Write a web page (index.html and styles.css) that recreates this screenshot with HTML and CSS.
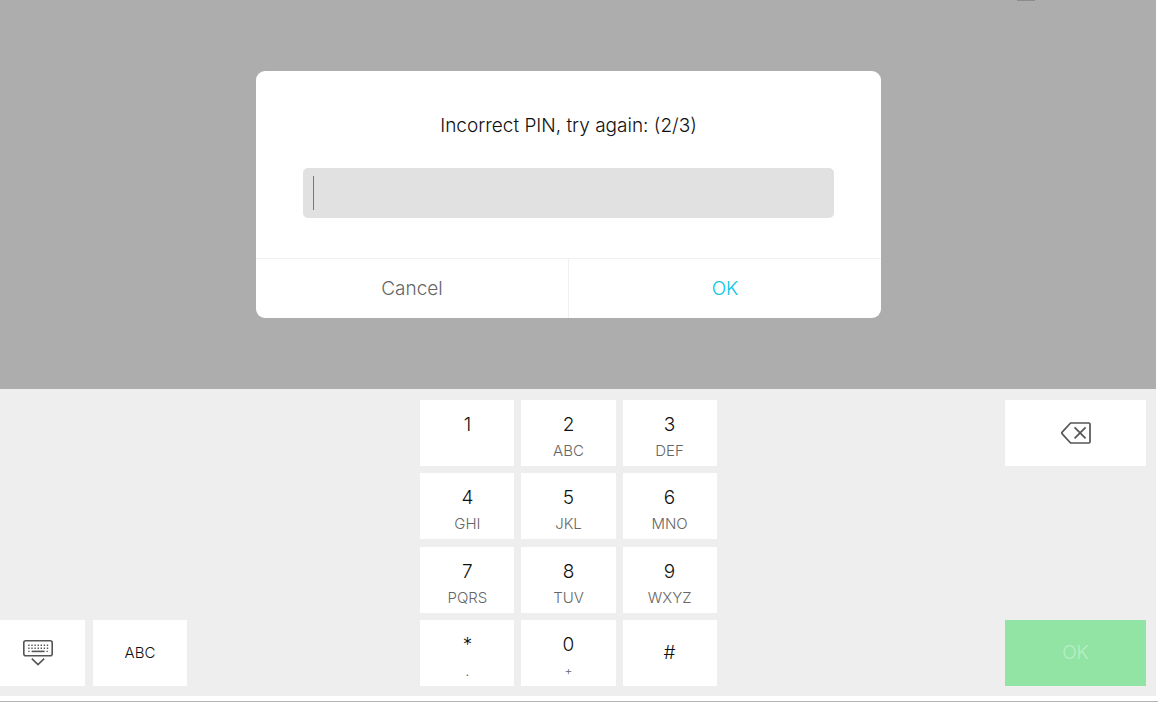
FILE: index.html
```html
<!DOCTYPE html>
<html lang="en">
<head>
<meta charset="utf-8">
<title>Enter PIN</title>
<link rel="stylesheet" href="styles.css">
</head>
<body>
<main class="screen">
  <section class="stage">
    <span class="handle"></span>
    <form class="dialog" role="dialog" aria-labelledby="pin-label">
      <div class="dialog-body">
        <label class="dialog-title" id="pin-label" for="pin">Incorrect PIN, try again: (2/3)</label>
        <div class="pin-field">
          <span class="caret"></span>
          <input class="pin-input" id="pin" type="password" inputmode="numeric">
        </div>
      </div>
      <div class="dialog-actions">
        <button class="action" type="button">Cancel</button>
        <button class="action action-primary" type="button">OK</button>
      </div>
    </form>
  </section>
  <section class="keyboard" aria-label="Keyboard">
    <div class="side side-left">
      <button class="key" type="button" aria-label="Hide keyboard">
        <svg class="icon" width="30" height="26" viewBox="0 0 30 26" fill="none" stroke="#555" stroke-width="1.6">
          <rect x="0.8" y="0.8" width="28.4" height="15" rx="2"/>
          <path d="M5.2 5.2h20M5.2 8.2h20" stroke-dasharray="1.4 1.7" stroke-width="1.4"/>
          <path d="M5.2 11.4h1.4M23.4 11.4h1.4" stroke-width="1.4"/>
          <path d="M8.6 11.4h13" stroke-width="1.6"/>
          <path d="M8.8 18.6l6.2 6 6.2-6"/>
        </svg>
      </button>
      <button class="key key-mode" type="button">ABC</button>
    </div>
    <div class="keypad">
      <button class="key key-double" type="button"><span class="digit">1</span><span class="letters"></span></button>
      <button class="key key-double" type="button"><span class="digit">2</span><span class="letters">ABC</span></button>
      <button class="key key-double" type="button"><span class="digit">3</span><span class="letters">DEF</span></button>
      <button class="key key-double" type="button"><span class="digit">4</span><span class="letters">GHI</span></button>
      <button class="key key-double" type="button"><span class="digit">5</span><span class="letters">JKL</span></button>
      <button class="key key-double" type="button"><span class="digit">6</span><span class="letters">MNO</span></button>
      <button class="key key-double" type="button"><span class="digit">7</span><span class="letters">PQRS</span></button>
      <button class="key key-double" type="button"><span class="digit">8</span><span class="letters">TUV</span></button>
      <button class="key key-double" type="button"><span class="digit">9</span><span class="letters">WXYZ</span></button>
      <button class="key key-double" type="button"><span class="digit">*</span><span class="letters">.</span></button>
      <button class="key key-double" type="button"><span class="digit">0</span><span class="letters letters-small">+</span></button>
      <button class="key" type="button"><span class="digit">#</span></button>
    </div>
    <div class="side side-right">
      <button class="key" type="button" aria-label="Delete">
        <svg class="icon" width="30" height="22" viewBox="0 0 30 22" fill="none" stroke="#555" stroke-width="1.7">
          <path d="M9.6 1h18.2a1.2 1.2 0 0 1 1.2 1.2v17.6a1.2 1.2 0 0 1-1.2 1.2H9.6L1.4 12.2a1.7 1.7 0 0 1 0-2.4z"/>
          <path d="M13.6 5.4l11 11M24.6 5.4l-11 11"/>
        </svg>
      </button>
      <button class="key key-ok" type="button">OK</button>
    </div>
  </section>
</main>
</body>
</html>
```
FILE: styles.css
```css
* {
  box-sizing: border-box;
}

body {
  margin: 0;
  height: 100vh;
  padding: 0 2px 5px 0;
  border-bottom: 1px solid #b5b5b5;
  overflow: hidden;
  background: #fff;
  color: #111;
  font-family: Inter, "Liberation Sans", sans-serif;
  font-weight: 300;
}

button,
input {
  border: 0;
  padding: 0;
  background: none;
  color: inherit;
  font: inherit;
  outline: none;
}

/* The left edge of the device screen runs past the window. */
.screen {
  display: flex;
  flex-direction: column;
  height: 100%;
  margin-left: -19px;
}

.stage {
  position: relative;
  flex: 1;
  display: flex;
  align-items: center;
  justify-content: center;
  background: #adadad;
}

.handle {
  position: absolute;
  top: 0;
  right: 121px;
  width: 18px;
  height: 1px;
  background: #8c8c8c;
}

.dialog {
  width: 53.2%;
  border-radius: 9px;
  overflow: hidden;
  background: #fff;
  font-size: 19px;
  line-height: 24px;
}

.dialog-body {
  display: flex;
  flex-direction: column;
  gap: 30px;
  padding: 43px 47px 40px;
}

.dialog-title {
  text-align: center;
}

.pin-field {
  display: flex;
  align-items: center;
  height: 50px;
  padding: 0 10px;
  border-radius: 5px;
  background: #e1e1e1;
}

.caret {
  width: 1px;
  height: 34px;
  background: #777;
}

.pin-input {
  flex: 1;
  height: 100%;
}

.dialog-actions {
  display: flex;
  border-top: 1px solid #f0f0f0;
}

.action {
  flex: 1;
  height: 59px;
  color: #666;
}

.action-primary {
  border-left: 1px solid #f0f0f0;
  color: #04c4e4;
}

.keyboard {
  display: grid;
  grid-template-columns: 1fr 26% 1fr;
  min-height: 307px;
  padding: 11px 10px 10px;
  background: #eee;
}

.side {
  display: flex;
  justify-content: space-between;
}

.side-left {
  align-items: flex-end;
  justify-content: flex-start;
  gap: 8px;
}

.side-left .key {
  width: 94px;
}

.side-right {
  flex-direction: column;
  align-items: flex-end;
}

.side-right .key {
  width: 141px;
}

.keypad {
  display: grid;
  grid-template-columns: repeat(3, 1fr);
  align-content: space-between;
  gap: 7px;
  padding: 0 2px;
}

.key {
  display: flex;
  flex-direction: column;
  align-items: center;
  justify-content: center;
  height: 66px;
  background: #fff;
  line-height: 24px;
}

.key-double {
  padding-top: 8px;
}

.key-mode {
  font-size: 15px;
}

.digit {
  font-size: 19px;
  line-height: 28px;
}

.letters {
  height: 24px;
  color: #666;
  font-size: 15px;
  line-height: 24px;
}

.letters-small {
  font-size: 12px;
}

.key-ok {
  background: #92e4a4;
  color: #b9efc5;
  font-size: 19px;
}

.icon {
  display: block;
}
```
